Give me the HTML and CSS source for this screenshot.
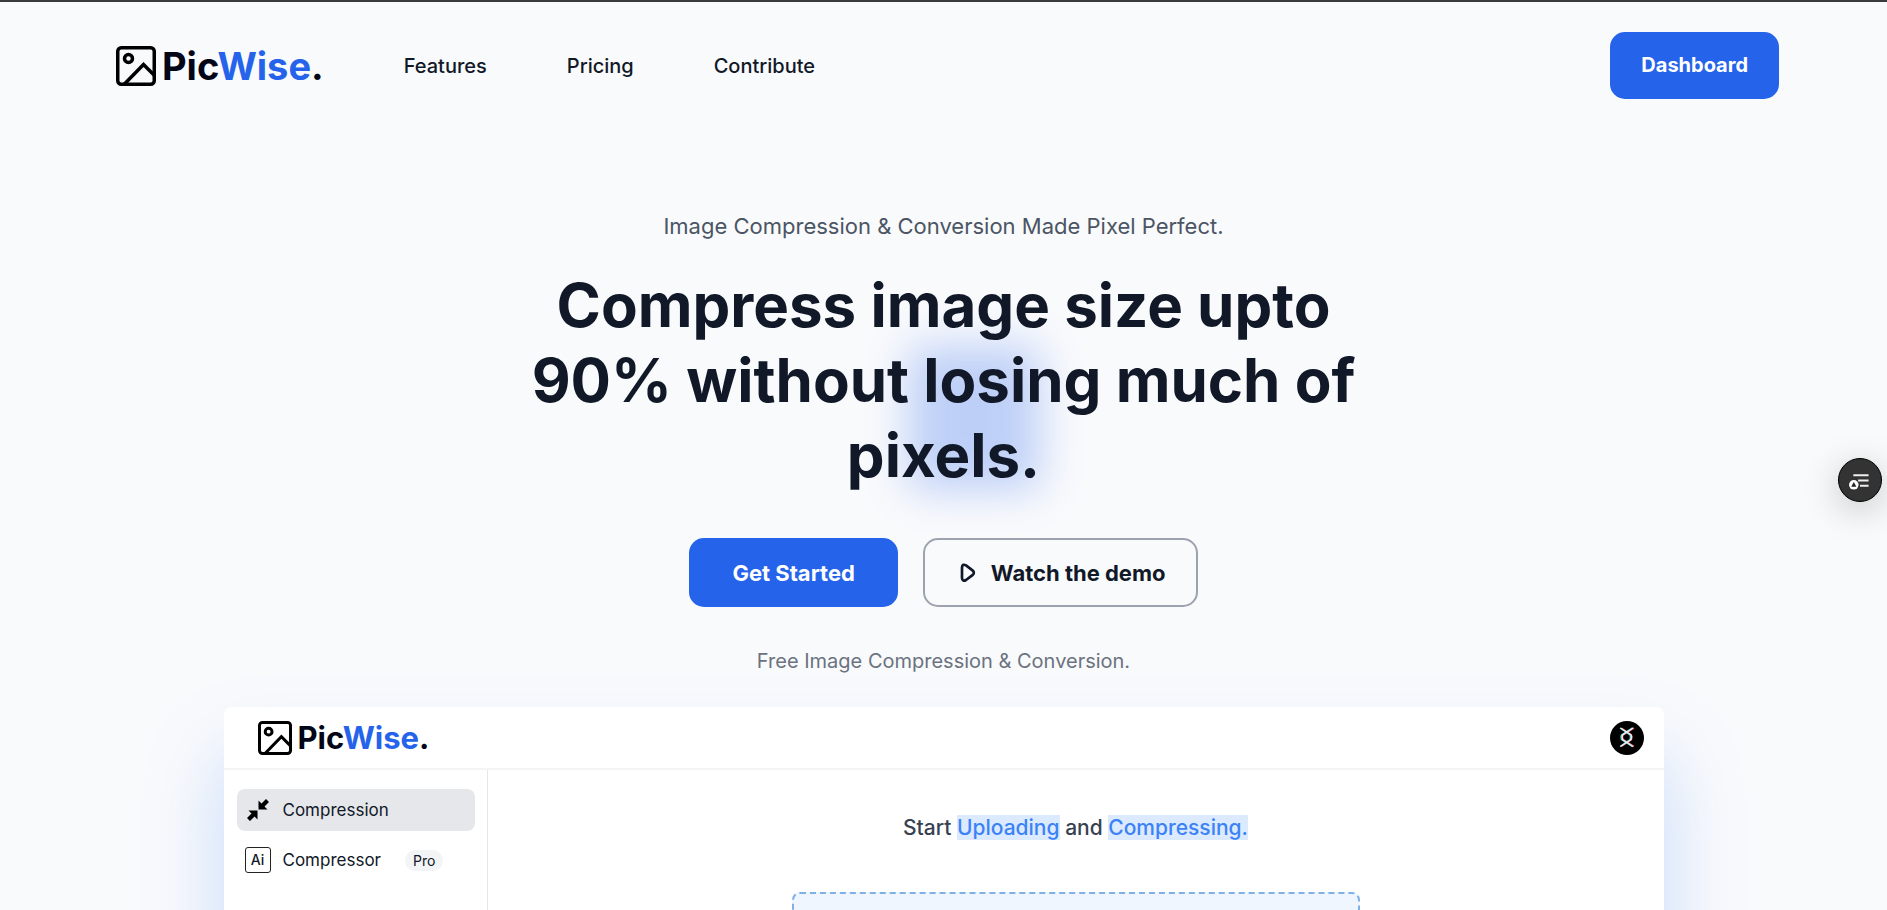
FILE: index.html
```html
<!DOCTYPE html>
<html lang="en">
<head>
<meta charset="utf-8">
<meta name="viewport" content="width=device-width, initial-scale=1">
<title>PicWise</title>
<link rel="stylesheet" href="styles.css">
</head>
<body>
<svg class="sprite" aria-hidden="true">
  <symbol id="picture" viewBox="0 0 40 40">
    <g fill="none" stroke="#000" stroke-width="3.500">
      <rect x="1.750" y="1.750" width="36.500" height="36.500" rx="3.500"/>
      <circle cx="12.500" cy="12.500" r="4"/>
      <path d="M8 38.500L27.500 18.500L38.500 29.500"/>
    </g>
  </symbol>
</svg>

<header class="site-header">
  <a class="logo" href="#"><svg class="logo-icon" aria-hidden="true"><use href="#picture"/></svg><span>Pic<b>Wise</b>.</span></a>
  <nav class="nav">
    <a href="#features">Features</a>
    <a href="#pricing">Pricing</a>
    <a href="#contribute">Contribute</a>
  </nav>
  <button class="btn btn-dashboard" type="button">Dashboard</button>
</header>

<main class="hero">
  <p class="tagline">Image Compression &amp; Conversion Made Pixel Perfect.</p>
  <h1 class="headline"><span class="glow"></span><span class="headline-text">Compress image size upto 90% without losing much of pixels.</span></h1>
  <div class="actions">
    <button class="btn btn-start" type="button">Get Started</button>
    <button class="btn btn-demo" type="button">
      <svg class="play" viewBox="0 0 16 20" aria-hidden="true"><path d="M2 4.500C2 1.500 4 1.200 6 2.400L12.500 7.300C14.300 8.700 14.300 10.700 12.500 12.100L6 17C4 18.300 2 17.700 2 15Z" fill="none" stroke="#111827" stroke-width="2.700" stroke-linejoin="round"/></svg>
      Watch the demo
    </button>
  </div>
  <p class="note">Free Image Compression &amp; Conversion.</p>

  <section class="preview">
    <div class="preview-bar">
      <a class="logo logo-small" href="#"><svg class="logo-icon" aria-hidden="true"><use href="#picture"/></svg><span>Pic<b>Wise</b>.</span></a>
      <svg class="avatar" viewBox="0 0 34 34" role="img" aria-label="Account">
        <circle cx="17" cy="17" r="17"/>
        <g fill="none" stroke-width="1.500">
          <path stroke="#e5484d" d="M11.500 7L21.500 14L22 16L21.500 18.500L11.500 25.500M24 7L13 14L12.500 16L13 18.500L24 25.500"/>
          <path stroke="#3fc6cc" d="M10 7L20 14L20.500 16L20 18.500L10 25.500M22.500 7L11.500 14L11 16L11.500 18.500L22.500 25.500"/>
          <path stroke="#eee" d="M10.500 7L21 14L21.500 16L21 18.500L10.500 25.500M23 7L12.500 14L12 16L12.500 18.500L23 25.500"/>
        </g>
      </svg>
    </div>
    <div class="preview-body">
      <aside class="sidebar">
        <a class="side-item active" href="#compression">
          <svg class="side-icon" viewBox="0 0 26 26" aria-hidden="true"><path d="M13.500 12.500V3.500L16.500 6.500L21 2L24 5L19.500 9.500L22.500 12.500ZM12.500 13.500V22.500L9.500 19.500L5 24L2 21L6.500 16.500L3.500 13.500Z"/></svg>
          <span>Compression</span>
        </a>
        <a class="side-item" href="#compressor">
          <span class="ai">Ai</span>
          <span>Compressor</span>
          <span class="pill">Pro</span>
        </a>
      </aside>
      <div class="workspace">
        <h2 class="prompt">Start <mark>Uploading</mark> and <mark>Compressing.</mark></h2>
        <div class="dropzone"></div>
      </div>
    </div>
  </section>
</main>

<button class="float" type="button" aria-label="Open reader panel">
  <svg viewBox="0 0 44 44" aria-hidden="true">
    <path d="M15 17H31M20 22.500H31M22 28H31" stroke="#eee" stroke-width="2"/>
    <circle cx="15.500" cy="27" r="5" fill="#fff"/>
    <path d="M12.800 29L15.500 24L18.200 29Z" fill="#222"/>
  </svg>
</button>
</body>
</html>
```
FILE: styles.css
```css
* { box-sizing: border-box; }

body {
  margin: 0;
  height: 100vh;
  overflow: hidden;
  border-top: 2px solid #3b3b3b;
  background: #f9fafc;
  color: #111827;
  font-family: Inter, "Liberation Sans", sans-serif;
}

a { color: inherit; text-decoration: none; }
h1, h2, p { margin: 0; }
.sprite { display: none; }

.btn {
  border: 0;
  border-radius: 15px;
  background: #2563eb;
  color: #fff;
  font-family: inherit;
  font-weight: 700;
  cursor: pointer;
}

.site-header {
  display: flex;
  align-items: center;
  padding: 30px 108px 0 116px;
}

.logo {
  display: flex;
  align-items: center;
  gap: 6px;
  color: #020617;
  font-size: 38px;
  font-weight: 700;
  line-height: 48px;
}
.logo b { color: #2563eb; font-weight: inherit; }
.logo-icon { width: 40px; height: 42px; }

.nav {
  display: flex;
  gap: 80px;
  margin-left: 80px;
  font-size: 20px;
  font-weight: 500;
  line-height: 28px;
}

.btn-dashboard {
  margin-left: auto;
  padding: 19px 31px 20px;
  font-size: 20px;
  line-height: 28px;
}

.hero {
  display: flex;
  flex-direction: column;
  align-items: center;
  padding: 111px 32px 0;
}

.tagline { color: #4b5563; font-size: 22px; line-height: 32px; }

.headline {
  position: relative;
  max-width: 900px;
  margin-top: 26px;
  font-size: 60px;
  font-weight: 700;
  line-height: 75px;
  text-align: center;
}
.headline-text { position: relative; }
.glow {
  position: absolute;
  top: 78px;
  left: calc(50% - 36px);
  width: 132px;
  height: 144px;
  background: #2563eb;
  opacity: .28;
  filter: blur(22px);
}

.actions { display: flex; gap: 25px; margin-top: 45px; }
.btn-start, .btn-demo { height: 69px; font-size: 22px; line-height: 28px; }
.btn-start { padding: 0 43px; }
.btn-demo {
  display: flex;
  align-items: center;
  gap: 15px;
  padding: 0 30px 0 35px;
  border: 2px solid #9ca3af;
  background: transparent;
  color: #111827;
}
.play { width: 16px; height: 20px; }

.note { margin-top: 40px; color: #6b7280; font-size: 20px; line-height: 28px; }

.preview {
  width: 100%;
  max-width: 1440px;
  margin-top: 32px;
  border-radius: 8px;
  background: #fff;
  box-shadow: 0 50px 80px rgba(59, 130, 246, .26);
}
.preview-bar {
  display: flex;
  align-items: center;
  justify-content: space-between;
  height: 63px;
  padding: 0 20px 0 34px;
  border-bottom: 2px solid #f3f4f6;
}
.logo-small { font-size: 31px; line-height: 40px; }
.logo-small .logo-icon { width: 34px; height: 34px; }
.avatar { width: 34px; height: 34px; }

.preview-body { display: flex; min-height: 500px; }
.sidebar {
  display: flex;
  flex-direction: column;
  gap: 8px;
  width: 264px;
  padding: 19px 12px 19px 13px;
  border-right: 1px solid #e5e7eb;
}
.side-item {
  display: flex;
  align-items: center;
  gap: 12px;
  height: 42px;
  padding: 0 8px;
  border-radius: 8px;
  font-size: 17px;
  line-height: 24px;
}
.active { background: #e5e7eb; }
.side-icon, .ai { width: 26px; height: 26px; }
.ai {
  border: 1px solid #222;
  border-radius: 3px;
  font-size: 14px;
  font-weight: 500;
  text-align: center;
}
.pill {
  margin-left: 12px;
  padding: 0 8px;
  border-radius: 11px;
  background: #f3f4f6;
  font-size: 14px;
  line-height: 21px;
}

.workspace {
  display: flex;
  flex: 1;
  flex-direction: column;
  align-items: center;
  padding-top: 42px;
}
.prompt { color: #374151; font-size: 21px; font-weight: 500; line-height: 32px; }
.prompt mark { background: #dbeafe; color: #3b82f6; }
.dropzone {
  width: 568px;
  max-width: 90%;
  height: 300px;
  margin-top: 48px;
  border: 2px dashed #7fb0e6;
  border-radius: 8px;
  background: #eff6ff;
}

.float {
  position: fixed;
  top: 458px;
  right: 5px;
  width: 44px;
  height: 44px;
  padding: 0;
  border: 1px solid #000;
  border-radius: 50%;
  background: #333;
  box-shadow: 0 8px 36px rgba(0, 0, 0, .22);
}
.float svg { display: block; width: 100%; height: 100%; }
```
